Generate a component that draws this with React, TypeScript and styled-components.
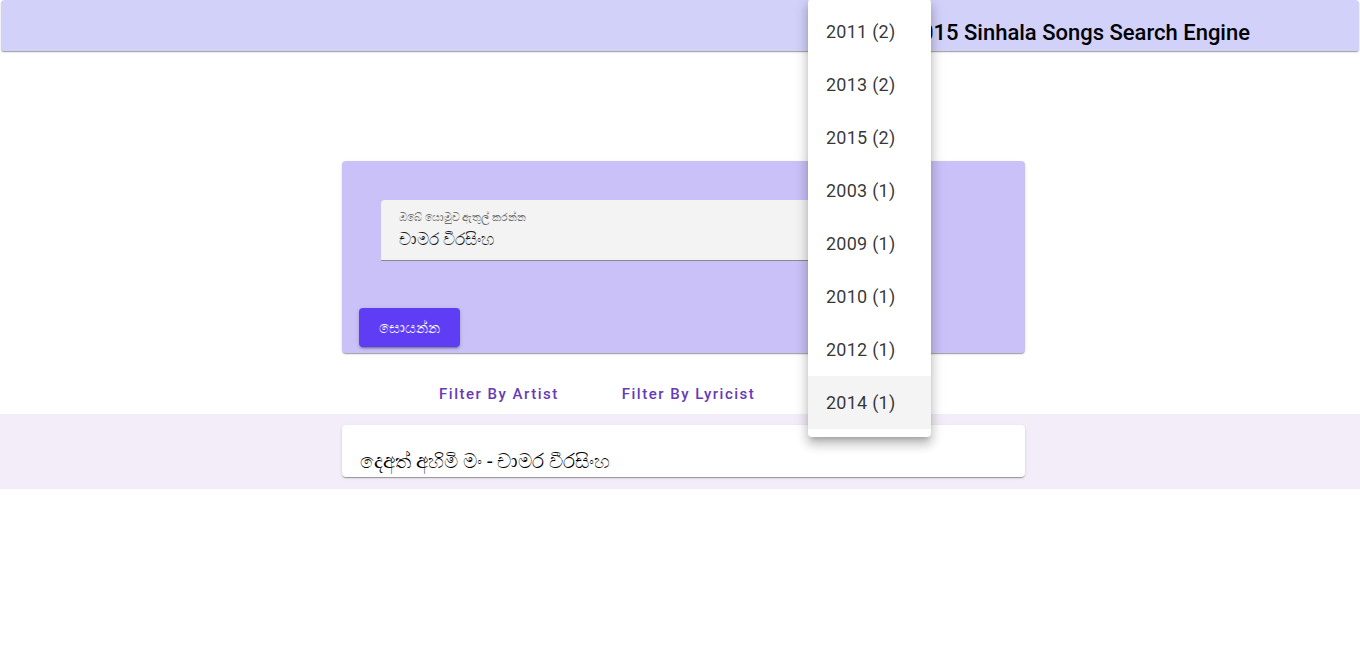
import React from "react";
import styled, { createGlobalStyle } from "styled-components";

const Global = createGlobalStyle`
  html, body { margin: 0; padding: 0; background: #ffffff; }
  body { font-family: Roboto, "Noto Sans", "DejaVu Sans", sans-serif; }
`;

const Page = styled.div`
  position: relative;
  width: 1360px;
  min-height: 646px;
  display: flex;
  flex-direction: column;
`;

const AppBar = styled.header`
  height: 51px;
  box-sizing: border-box;
  margin: 0 1px;
  padding: 17px 109px 0 0;
  display: flex;
  justify-content: flex-end;
  background: #d1d1fa;
  border-radius: 4px 4px 2px 2px;
  box-shadow: 0 2px 1px -1px rgba(0,0,0,0.2), 0 1px 1px 0 rgba(0,0,0,0.14), 0 1px 3px 0 rgba(0,0,0,0.12);
`;

const Title = styled.h1`
  margin: 0;
  font-family: Roboto, sans-serif;
  font-size: 22px;
  font-weight: 500;
  line-height: 32px;
  letter-spacing: 0;
  color: #000;
`;

const Main = styled.main`
  padding-left: 7px;
  display: flex;
  flex-direction: column;
  align-items: center;
`;

const SearchCard = styled.section`
  margin-top: 110px;
  width: 683px;
  height: 192px;
  box-sizing: border-box;
  padding: 39px 39px 6px 17px;
  display: flex;
  flex-direction: column;
  justify-content: space-between;
  align-items: flex-start;
  background: #cac1f8;
  border-radius: 4px;
  box-shadow: 0 2px 1px -1px rgba(0,0,0,0.2), 0 1px 1px 0 rgba(0,0,0,0.14), 0 1px 3px 0 rgba(0,0,0,0.12);
`;

const Field = styled.div`
  margin-left: 22px;
  width: 500px;
  height: 61px;
  box-sizing: border-box;
  padding: 10px 18px 0;
  background: #f3f3f3;
  border-radius: 4px 4px 0 0;
  border-bottom: 1px solid #8a8a8a;
  display: flex;
  flex-direction: column;
`;

const FieldLabel = styled.label`
  font-size: 10.5px;
  line-height: 15px;
  color: #6e6e6e;
`;

const FieldValue = styled.div`
  margin-top: 4px;
  font-size: 16.5px;
  line-height: 22px;
  color: #1a1a1a;
`;

const SearchButton = styled.button`
  width: 101px;
  height: 39px;
  border: none;
  border-radius: 4px;
  background: #5f3df5;
  color: #ffffff;
  font-family: Roboto, sans-serif;
  font-size: 15px;
  font-weight: 500;
  box-shadow: 0 3px 1px -2px rgba(0,0,0,0.2), 0 2px 2px 0 rgba(0,0,0,0.14), 0 1px 5px 0 rgba(0,0,0,0.12);
  cursor: pointer;
`;

const FilterRow = styled.nav`
  margin-top: 23px;
  margin-bottom: 2px;
  height: 36px;
  display: flex;
  gap: 27px;
  justify-content: center;
  align-items: center;
`;

const FilterButton = styled.button`
  background: transparent;
  border: none;
  padding: 6px 18px;
  font-family: Roboto, sans-serif;
  font-size: 15px;
  font-weight: 500;
  letter-spacing: 1.5px;
  color: #673ab7;
  cursor: pointer;
`;

const ResultStrip = styled.section`
  background: #f2edf8;
  padding: 11px 0 12px 7px;
  display: flex;
  justify-content: center;
`;

const ResultCard = styled.article`
  width: 683px;
  height: 52px;
  box-sizing: border-box;
  padding: 24px 18px 3px;
  background: #ffffff;
  border-radius: 4px;
  box-shadow: 0 2px 1px -1px rgba(0,0,0,0.2), 0 1px 1px 0 rgba(0,0,0,0.14), 0 1px 3px 0 rgba(0,0,0,0.12);
`;

const ResultTitle = styled.h2`
  margin: 0;
  font-size: 20px;
  font-weight: 400;
  line-height: 25px;
  color: #000;
`;

const Menu = styled.ul`
  position: absolute;
  left: 808px;
  top: -1px;
  width: 123px;
  margin: 0;
  padding: 6px 0 8px;
  list-style: none;
  background: #ffffff;
  border-radius: 4px;
  box-shadow: 0 5px 5px -3px rgba(0,0,0,0.2), 0 8px 10px 1px rgba(0,0,0,0.14), 0 3px 14px 2px rgba(0,0,0,0.12);
`;

const MenuItem = styled.li<{ $active?: boolean }>`
  height: 53px;
  box-sizing: border-box;
  padding-left: 18px;
  display: flex;
  align-items: center;
  font-family: Roboto, sans-serif;
  font-size: 18px;
  letter-spacing: 0.25px;
  color: rgba(0,0,0,0.8);
  background: ${(p) => (p.$active ? "#f4f4f4" : "transparent")};
`;

const years = ["2011 (2)", "2013 (2)", "2015 (2)", "2003 (1)", "2009 (1)", "2010 (1)", "2012 (1)", "2014 (1)"];

export default function App() {
  return (
    <>
      <Global />
      <Page>
        <AppBar>
          <Title>2015 Sinhala Songs Search Engine</Title>
        </AppBar>
        <Main>
          <SearchCard>
            <Field>
              <FieldLabel>ඔබේ යොමුව ඇතුල් කරන්න</FieldLabel>
              <FieldValue>චාමර වීරසිංහ</FieldValue>
            </Field>
            <SearchButton>සොයන්න</SearchButton>
          </SearchCard>
          <FilterRow>
            <FilterButton>Filter By Artist</FilterButton>
            <FilterButton>Filter By Lyricist</FilterButton>
            <FilterButton>Filter By Year</FilterButton>
          </FilterRow>
        </Main>
        <ResultStrip>
          <ResultCard>
            <ResultTitle>දෙඅත් අහිමි මං - චාමර වීරසිංහ</ResultTitle>
          </ResultCard>
        </ResultStrip>
        <Menu>
          {years.map((y, i) => (
            <MenuItem key={y} $active={i === years.length - 1}>
              {y}
            </MenuItem>
          ))}
        </Menu>
      </Page>
    </>
  );
}
